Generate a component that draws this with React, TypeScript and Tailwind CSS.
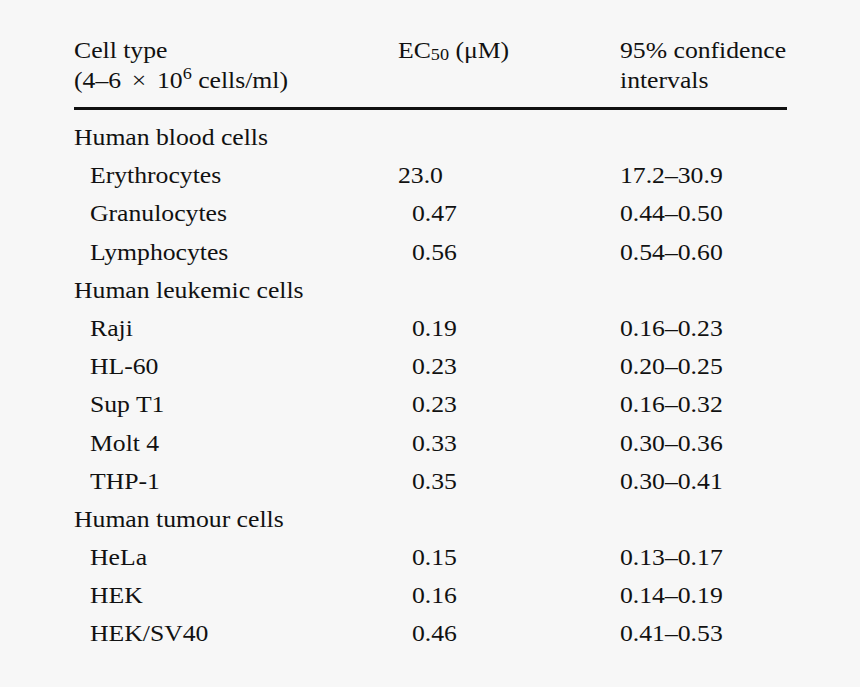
import React from "react";

type Row = { label: string; ec?: string; ci?: string; group?: boolean; pad?: boolean };

const rows: Row[] = [
  { label: "Human blood cells", group: true },
  { label: "Erythrocytes", ec: "23.0", ci: "17.2–30.9" },
  { label: "Granulocytes", ec: "0.47", ci: "0.44–0.50", pad: true },
  { label: "Lymphocytes", ec: "0.56", ci: "0.54–0.60", pad: true },
  { label: "Human leukemic cells", group: true },
  { label: "Raji", ec: "0.19", ci: "0.16–0.23", pad: true },
  { label: "HL-60", ec: "0.23", ci: "0.20–0.25", pad: true },
  { label: "Sup T1", ec: "0.23", ci: "0.16–0.32", pad: true },
  { label: "Molt 4", ec: "0.33", ci: "0.30–0.36", pad: true },
  { label: "THP-1", ec: "0.35", ci: "0.30–0.41", pad: true },
  { label: "Human tumour cells", group: true },
  { label: "HeLa", ec: "0.15", ci: "0.13–0.17", pad: true },
  { label: "HEK", ec: "0.16", ci: "0.14–0.19", pad: true },
  { label: "HEK/SV40", ec: "0.46", ci: "0.41–0.53", pad: true },
];

function T({ children }: { children: React.ReactNode }) {
  return <span className="inline-block origin-left scale-x-[1.07] whitespace-nowrap">{children}</span>;
}

export default function App() {
  return (
    <div
      className="w-[860px] h-[687px] bg-[#f7f7f7] text-[#111] text-[24px] overflow-hidden"
      style={{ fontFamily: '"Liberation Serif", "Times New Roman", serif' }}
    >
      <div className="pl-[74px] pt-[35px] w-[787px]">
        <div className="grid grid-cols-[324px_222px_1fr] leading-[30px]">
          <div>
            <div><T>Cell type</T></div>
            <div>
              <T>
                (4–6 <span className="mx-[4px]">×</span> 10<sup className="text-[17px] relative -top-[9px]">6</sup> cells/ml)
              </T>
            </div>
          </div>
          <div>
            <T>
              EC<sub className="text-[17px] relative top-[2px]">50</sub> (μM)
            </T>
          </div>
          <div>
            <div><T>95% confidence</T></div>
            <div><T>intervals</T></div>
          </div>
        </div>
        <div className="mt-[12px] border-t-[3px] border-[#111]" />
        <div className="pt-[8px]">
          {rows.map((r, i) => (
            <div key={i} className="grid grid-cols-[324px_222px_1fr] h-[38.2px] leading-[38px]">
              <div className={r.group ? "" : "pl-[16px]"}>
                <T>{r.label}</T>
              </div>
              <div className={r.pad ? "pl-[14px]" : ""}>{r.ec && <T>{r.ec}</T>}</div>
              <div>{r.ci && <T>{r.ci}</T>}</div>
            </div>
          ))}
        </div>
      </div>
    </div>
  );
}
